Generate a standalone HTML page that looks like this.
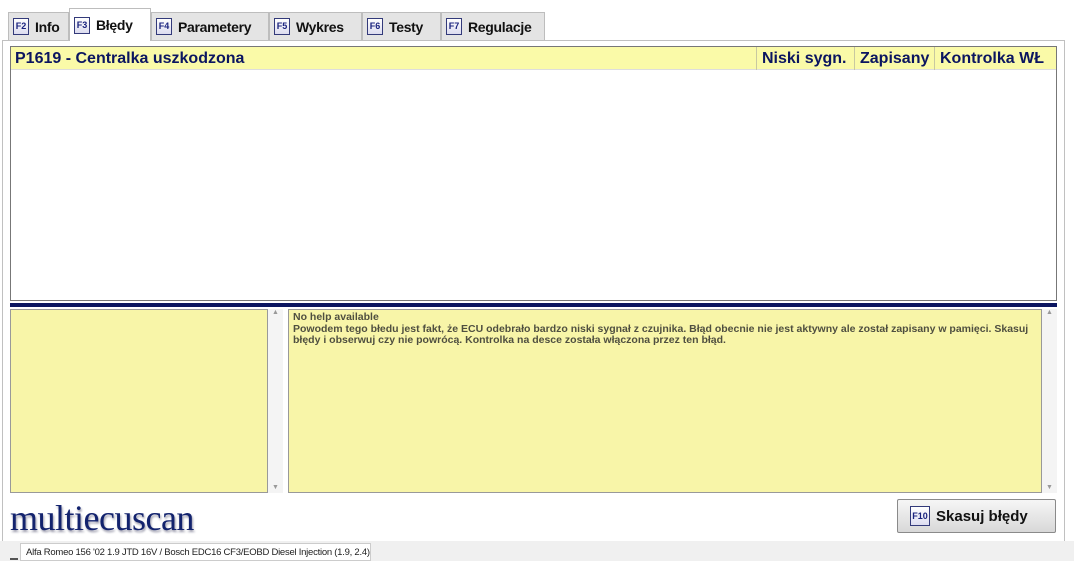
<!DOCTYPE html>
<html><head><meta charset="utf-8"><style>
*{margin:0;padding:0;box-sizing:border-box}
body{width:1074px;height:561px;background:#fff;position:relative;overflow:hidden;font-family:"Liberation Sans",Arial,sans-serif}
.tab{position:absolute;top:12px;height:28px;background:#e4e4e4;border:1px solid #bdbdbd;border-bottom:none;font-weight:bold;font-size:14px;color:#111;display:flex;align-items:center;padding-left:4px;letter-spacing:-0.3px}
.tab.sel{top:8px;height:33px;background:#fff;z-index:2}
.k{display:inline-block;width:16px;height:17px;border:1px solid #333a7a;background:linear-gradient(#fff,#dcdcf0);color:#1a237e;font-size:9px;font-weight:bold;text-align:center;line-height:15px;margin-right:6px;letter-spacing:0}
.abs{position:absolute}
.hdr{font-weight:bold;font-size:16px;color:#0b1560;position:absolute;top:0;height:23px;line-height:23px;border-left:1px solid #c8c8a0}
.help{font-weight:bold;font-size:10.5px;color:#4f4f40;line-height:11.5px}
</style></head><body>
<div class="tab" style="left:8px;width:61px"><span class="k">F2</span>Info</div>
<div class="tab sel" style="left:69px;width:82px"><span class="k">F3</span>Błędy</div>
<div class="tab" style="left:151px;width:118px"><span class="k">F4</span>Parametery</div>
<div class="tab" style="left:269px;width:93px"><span class="k">F5</span>Wykres</div>
<div class="tab" style="left:362px;width:79px"><span class="k">F6</span>Testy</div>
<div class="tab" style="left:441px;width:104px"><span class="k">F7</span>Regulacje</div>
<div class="abs" style="left:2px;top:40px;width:1063px;height:501px;border:1px solid #c0c0c0;border-bottom:none"></div>
<div class="abs" style="left:10px;top:46px;width:1047px;height:255px;border:1px solid #777">
 <div class="abs" style="left:0;top:0;width:1045px;height:23px;background:#fafaa8;border-bottom:1px solid #ddd">
  <div class="hdr" style="left:4px;border:none">P1619 - Centralka uszkodzona</div>
  <div class="hdr" style="left:745px;padding-left:5px">Niski sygn.</div>
  <div class="hdr" style="left:843px;padding-left:5px">Zapisany</div>
  <div class="hdr" style="left:923px;padding-left:5px">Kontrolka WŁ</div>
 </div>
</div>
<div class="abs" style="left:10px;top:303px;width:1047px;height:4px;background:#0b1560"></div>
<div class="abs" style="left:10px;top:309px;width:258px;height:184px;background:#f8f5a8;border:1px solid #999"></div>
<div class="abs" style="left:268px;top:309px;width:15px;height:184px;background:#f4f4f4;font-size:7px;color:#999;text-align:center">▲<div style="position:absolute;bottom:2px;width:15px">▼</div></div>
<div class="abs help" style="left:288px;top:309px;width:754px;height:184px;background:#f8f5a8;border:1px solid #999;padding:2px 4px">No help available<br>Powodem tego błedu jest fakt, że ECU odebrało bardzo niski sygnał z czujnika. Błąd obecnie nie jest aktywny ale został zapisany w pamięci. Skasuj błędy i obserwuj czy nie powrócą. Kontrolka na desce została włączona przez ten błąd.</div>
<div class="abs" style="left:1042px;top:309px;width:15px;height:184px;background:#f4f4f4;font-size:7px;color:#999;text-align:center">▲<div style="position:absolute;bottom:2px;width:15px">▼</div></div>
<div class="abs" style="left:10px;top:497px;font-family:'Liberation Serif',serif;font-size:36px;color:#13236e;text-shadow:1px 2px 2px #99a;letter-spacing:-0.5px">multiecuscan</div>
<div class="abs" style="left:897px;top:499px;width:159px;height:34px;border:1px solid #8a8a8a;border-radius:2px;background:linear-gradient(#f6f6f6,#d8d8d8);display:flex;align-items:center;padding-left:12px;font-weight:bold;font-size:15px;color:#111"><span class="k" style="width:20px;height:20px;line-height:18px">F10</span>Skasuj błędy</div>
<div class="abs" style="left:0;top:541px;width:1074px;height:20px;background:#f0f0f0"></div>
<div class="abs" style="left:20px;top:543px;width:351px;height:18px;background:#fff;border:1px solid #ccc;font-size:9.5px;letter-spacing:-0.25px;white-space:nowrap;overflow:hidden;color:#222;padding:3px 0 0 5px">Alfa Romeo 156 '02 1.9 JTD 16V / Bosch EDC16 CF3/EOBD Diesel Injection (1.9, 2.4)</div>
<div class="abs" style="left:10px;top:558px;width:8px;height:2px;background:#555"></div>
</body></html>
